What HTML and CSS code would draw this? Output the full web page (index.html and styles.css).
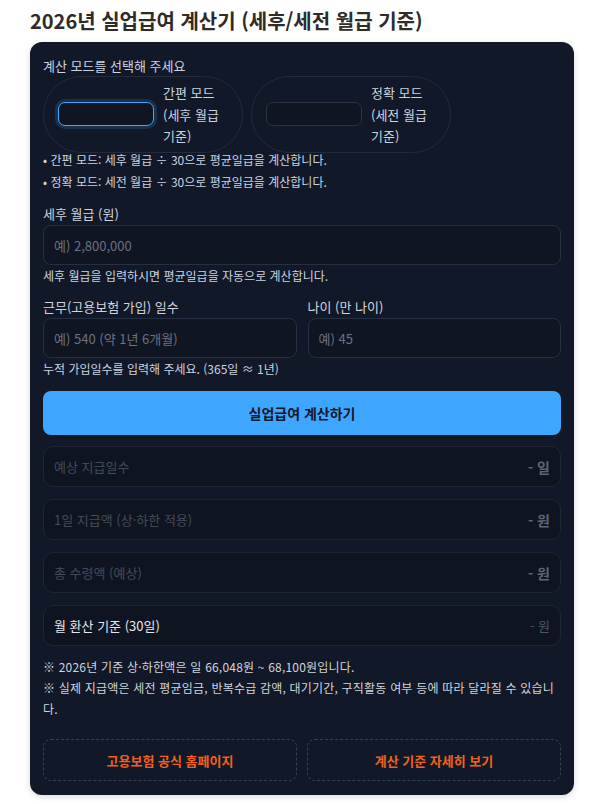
FILE: index.html
```html
<!DOCTYPE html>
<html lang="ko">

<head>
    <meta charset="utf-8">
    <title>2026년 실업급여 계산기</title>
    <link rel="stylesheet" href="styles.css">
</head>

<body>
    <div class="page">
        <h1 class="title">2026년 실업급여 계산기 (세후/세전 월급 기준)</h1>

        <div class="card">
            <div class="mode-label">계산 모드를 선택해 주세요</div>
            <div class="mode-list">
                <label class="mode">
                    <input type="radio" name="mode" value="simple" checked>
                    <span class="mode-text">간편 모드 (세후 월급 기준)</span>
                </label>
                <label class="mode">
                    <input type="radio" name="mode" value="exact">
                    <span class="mode-text">정확 모드 (세전 월급 기준)</span>
                </label>
            </div>
            <ul class="mode-help">
                <li>• 간편 모드: 세후 월급 ÷ 30으로 평균일급을 계산합니다.</li>
                <li>• 정확 모드: 세전 월급 ÷ 30으로 평균일급을 계산합니다.</li>
            </ul>

            <div class="field">
                <label for="salary">세후 월급 (원)</label>
                <input type="text" id="salary" placeholder="예) 2,800,000">
                <p class="help">세후 월급을 입력하시면 평균일급을 자동으로 계산합니다.</p>
            </div>

            <div class="field">
                <div class="field-row">
                    <div>
                        <label for="days">근무(고용보험 가입) 일수</label>
                        <input type="text" id="days" placeholder="예) 540 (약 1년 6개월)">
                    </div>
                    <div>
                        <label for="age">나이 (만 나이)</label>
                        <input type="text" id="age" placeholder="예) 45">
                    </div>
                </div>
                <p class="help">누적 가입일수를 입력해 주세요. (365일 ≈ 1년)</p>
            </div>

            <button type="button" class="calc-btn">실업급여 계산하기</button>

            <div class="results">
                <div class="result dim">
                    <span class="result-name">예상 지급일수</span>
                    <span class="result-value">- 일</span>
                </div>
                <div class="result dim">
                    <span class="result-name">1일 지급액 (상·하한 적용)</span>
                    <span class="result-value">- 원</span>
                </div>
                <div class="result dim">
                    <span class="result-name">총 수령액 (예상)</span>
                    <span class="result-value">- 원</span>
                </div>
                <div class="result">
                    <span class="result-name">월 환산 기준 (30일)</span>
                    <span class="result-value">- 원</span>
                </div>
            </div>

            <div class="notes">
                <p>※ 2026년 기준 상·하한액은 일 66,048원 ~ 68,100원입니다.</p>
                <p>※ 실제 지급액은 세전 평균임금, 반복수급 감액, 대기기간, 구직활동 여부 등에 따라 달라질 수 있습니다.</p>
            </div>

            <div class="links">
                <a href="#" class="link-btn">고용보험 공식 홈페이지</a>
                <a href="#" class="link-btn">계산 기준 자세히 보기</a>
            </div>
        </div>
    </div>
</body>

</html>
```

FILE: styles.css
```css
body {
    margin: 0;
    padding: 0;
    background-color: #fff;
    font-family: "Noto Sans CJK KR", "Noto Sans", sans-serif;
}

.page {
    width: 544px;
    padding: 0 25px 10px 30px;
}

.title {
    margin: 0;
    padding-top: 6px;
    height: 36px;
    font-size: 20px;
    line-height: 30px;
    font-weight: 700;
    color: #2e2b29;
}

.card {
    background-color: #111827;
    border-radius: 12px;
    padding: 14px 13px 14px 13px;
    box-shadow: 0 2px 6px rgba(0, 0, 0, 0.15);
    color: #d1d5db;
}

.mode-label {
    font-size: 13px;
    line-height: 20px;
    color: #cbd5e1;
}

.mode-list {
    display: flex;
    gap: 8px;
}

.mode {
    display: flex;
    align-items: center;
    gap: 9px;
    width: 200px;
    box-sizing: border-box;
    padding: 5px 14px;
    border: 1px solid #222c3d;
    border-radius: 40px;
    cursor: pointer;
}

.mode input {
    appearance: none;
    -webkit-appearance: none;
    margin: 0;
    width: 96px;
    height: 24px;
    flex: none;
    box-sizing: border-box;
    border: 1px solid #2a3446;
    border-radius: 7px;
    background-color: #0f1521;
}

.mode input:checked {
    border: 1.5px solid #3ea6ff;
    box-shadow: 0 0 0 3px rgba(62, 166, 255, 0.18);
}

.mode-text {
    width: 66px;
    font-size: 13px;
    line-height: 21.5px;
    color: #cbd5e1;
}

.mode-help {
    list-style: none;
    margin: -3.5px 0 0 0;
    padding: 0;
    font-size: 12px;
    line-height: 22px;
    color: #cbd5e1;
}

.field {
    margin-top: 12px;
}

.field + .field {
    margin-top: 13px;
}

.field label {
    display: block;
    font-size: 13px;
    line-height: 18px;
    margin-bottom: 2px;
    color: #d1d5db;
}

.field input {
    display: block;
    width: 100%;
    height: 40px;
    box-sizing: border-box;
    padding: 0 10px;
    border: 1px solid #253043;
    border-radius: 8px;
    background-color: #0f1521;
    color: #e5e7eb;
    font-family: inherit;
    font-size: 13px;
}

.field input::placeholder {
    color: #6b7280;
}

.field-row {
    display: grid;
    grid-template-columns: 1fr 1fr;
    gap: 11px;
}

.help {
    margin: 1px 0 0 0;
    font-size: 12px;
    line-height: 19px;
    color: #cbd5e1;
}

.calc-btn {
    display: block;
    width: 100%;
    height: 44px;
    margin-top: 13px;
    border: none;
    border-radius: 8px;
    background-color: #3fa6ff;
    color: #111827;
    font-family: inherit;
    font-size: 14px;
    font-weight: 700;
    cursor: pointer;
}

.results {
    display: flex;
    flex-direction: column;
    gap: 12px;
    margin-top: 11px;
}

.result {
    display: flex;
    justify-content: space-between;
    align-items: center;
    height: 41px;
    box-sizing: border-box;
    padding: 0 10px;
    border: 1px solid #1e2635;
    border-radius: 10px;
    background-color: #0f1520;
    font-size: 13px;
}

.result-name {
    color: #e5e7eb;
}

.result-value {
    color: #4b5563;
}

.result.dim .result-name {
    color: #434b58;
}

.result.dim .result-value {
    color: #5d6674;
    font-weight: 700;
    font-size: 14px;
}

.notes {
    margin-top: 10px;
    font-size: 12px;
    line-height: 21px;
    letter-spacing: 0.2px;
    color: #d1d5db;
}

.notes p {
    margin: 0;
}

.links {
    display: grid;
    grid-template-columns: 1fr 1fr;
    gap: 10px;
    margin-top: 20px;
}

.link-btn {
    display: flex;
    align-items: center;
    justify-content: center;
    height: 40px;
    border: 1px dashed #334155;
    border-radius: 8px;
    color: #f0621c;
    font-size: 13px;
    font-weight: 700;
    text-decoration: none;
}
```
